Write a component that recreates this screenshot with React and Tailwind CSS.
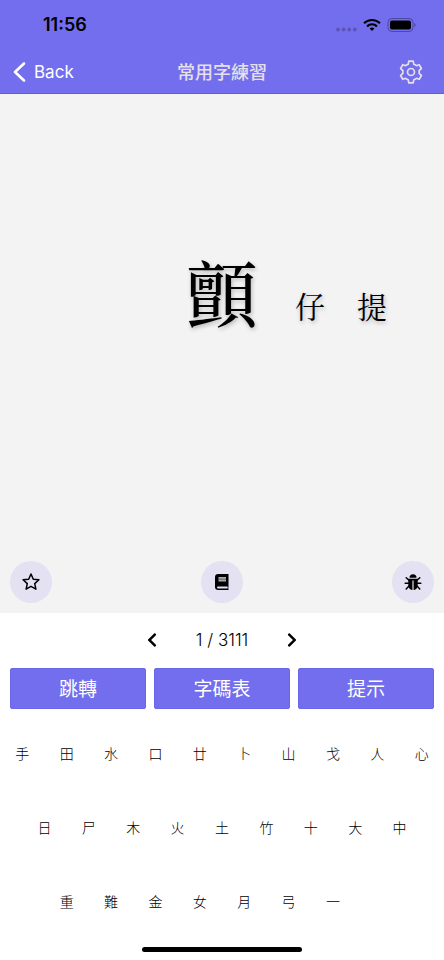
import React from 'react';
import { FaChevronLeft, FaChevronRight } from 'react-icons/fa';

const ACTIONS = ['跳轉', '字碼表', '提示'];

// The empty key keeps the third row aligned with the two above
const KEY_ROWS = [
  ['手', '田', '水', '口', '廿', '卜', '山', '戈', '人', '心'],
  ['日', '尸', '木', '火', '土', '竹', '十', '大', '中'],
  ['重', '難', '金', '女', '月', '弓', '一', ''],
];

function GearIcon() {
  return (
    <svg
      width="24"
      height="24"
      viewBox="0 0 24 24"
      fill="none"
      stroke="currentColor"
      strokeWidth="1.7"
      strokeLinejoin="round"
    >
      <path d="M9.8 1.200h4.400l.6 3.100q1.300.400 2.500 1.400l2.900-1 2.200 3.800-2.300 2.100q.3 1.400 0 2.800l2.300 2.100-2.200 3.800-2.900-1q-1.200 1-2.500 1.400l-.6 3.100H9.800l-.6-3.100q-1.300-.4-2.500-1.400l-2.900 1-2.200-3.800 2.300-2.100q-.3-1.400 0-2.800L1.600 8.500l2.200-3.800 2.900 1q1.200-1 2.500-1.400z" />
      <circle cx="12" cy="12" r="3.500" />
    </svg>
  );
}

function StarIcon() {
  return (
    <svg
      width="20"
      height="20"
      viewBox="0 0 20 20"
      fill="none"
      stroke="currentColor"
      strokeWidth="1.5"
      strokeLinejoin="round"
    >
      <path d="M10 2l2.300 5.200 5.600.6-4.200 3.800 1.200 5.600-4.900-2.900-4.900 2.900 1.200-5.600-4.200-3.800 5.600-.6z" />
    </svg>
  );
}

function BookIcon() {
  return (
    <svg width="16" height="18" viewBox="0 0 16 18">
      <path
        fill="currentColor"
        d="M4 1h10.500v13.200c-.4.400-.4 1.300 0 1.800v1H4c-1.700 0-3-1.200-3-2.800V4c0-1.700 1.300-3 3-3z"
      />
      <path fill="#aaa9b5" d="M4.500 4h7.500v4.500H4.500z" />
      <path fill="none" stroke="#111" strokeWidth="0.5" d="M4.500 6.200h7.500" />
      <path fill="#e3e1f2" d="M4 13.500h9.600v2H4a1 1 0 0 1 0-2z" />
    </svg>
  );
}

function BugIcon() {
  return (
    <svg width="18" height="18" viewBox="0 0 18 18">
      <path fill="currentColor" d="M5.500 4.700a3.500 3.500 0 0 1 7 0z" />
      <path fill="currentColor" d="M4.300 5.700h9.400v6.300c0 3-2 5-4.700 5s-4.700-2-4.700-5z" />
      <path
        fill="none"
        stroke="currentColor"
        strokeWidth="1.5"
        strokeLinecap="round"
        d="M2.200 4.700l2.800 2.500M15.800 4.700L13 7.200M1.200 10.200h3.600M16.800 10.200h-3.600M5 13l-2.800 3M13 13l2.800 3"
      />
      <path fill="none" stroke="#e3e1f2" strokeWidth="1.2" d="M9 7.500V17" />
    </svg>
  );
}

function StatusBar() {
  return (
    <div className="flex h-[50px] items-center justify-between pr-7 pl-[43px] text-black">
      <span className="text-lg leading-6 font-semibold">11:56</span>
      <div className="flex items-center gap-[6px]">
        <svg width="21" height="14" viewBox="0 0 21 14" fill="#5a54bd">
          <circle cx="2" cy="11.5" r="1.9" />
          <circle cx="7.6" cy="11.5" r="1.9" />
          <circle cx="13.2" cy="11.5" r="1.9" />
          <circle cx="18.8" cy="11.5" r="1.9" />
        </svg>
        <svg width="18" height="14" viewBox="0 0 18 14" fill="none" stroke="black" strokeWidth="2.2">
          <path d="M1 5.2C5.6.9 12.4.9 17 5.2" />
          <path d="M4 8.4c2.9-2.6 7.1-2.6 10 0" />
          <path d="M9 9.4c-1 0-1.8.4-2.4 1L9 13l2.4-2.6c-.6-.6-1.4-1-2.4-1z" fill="black" stroke="none" />
        </svg>
        <svg width="29" height="14" viewBox="0 0 29 14">
          <rect x="1" y="0.5" width="25" height="13" rx="4" fill="none" stroke="#4c47a0" />
          <rect x="3" y="2.5" width="21" height="9" rx="2" fill="black" />
          <path d="M27.3 5v4c.8-.3 1.3-1.1 1.3-2s-.5-1.7-1.3-2z" fill="#4c47a0" />
        </svg>
      </div>
    </div>
  );
}

function Header() {
  return (
    <header className="border-b border-[#635bdf] bg-[#736eed]">
      <StatusBar />
      <div className="grid h-[43px] grid-cols-3 items-center px-3">
        <button type="button" className="flex items-center gap-2 text-[17px] leading-6 text-white">
          <svg
            width="14"
            height="22"
            viewBox="0 0 14 22"
            fill="none"
            stroke="currentColor"
            strokeWidth="2.6"
            strokeLinecap="round"
            strokeLinejoin="round"
          >
            <path d="M12 2.5 3 11l9 8.500" />
          </svg>
          Back
        </button>
        <h1 className="pt-[2px] text-center text-lg leading-6 font-medium text-[#e5e0ea]">
          常用字練習
        </h1>
        <button
          type="button"
          aria-label="Settings"
          className="mr-[9px] justify-self-end text-[#e5e0ea]"
        >
          <GearIcon />
        </button>
      </div>
    </header>
  );
}

function RoundButton({ label, children }) {
  return (
    <button
      type="button"
      aria-label={label}
      className="flex size-[42px] items-center justify-center rounded-full bg-[#e3e1f2] text-black"
    >
      {children}
    </button>
  );
}

function Practice() {
  return (
    <main className="flex h-[519px] flex-col justify-between bg-[#f3f3f3] px-[10px] pb-[10px]">
      <div className="mt-39 ml-44 flex items-end font-['Noto_Serif_CJK_TC','Noto_Sans_CJK_TC',serif] text-black text-shadow-[1px_2px_4px_rgba(0,0,0,0.25)]">
        <span className="text-[72px] leading-20 font-medium">顫</span>
        <span className="ml-[37px] text-3xl leading-[50px]">仔</span>
        <span className="ml-8 text-3xl leading-[50px]">提</span>
      </div>
      <div className="flex justify-between">
        <RoundButton label="Favourite">
          <StarIcon />
        </RoundButton>
        <RoundButton label="Dictionary">
          <BookIcon />
        </RoundButton>
        <RoundButton label="Report">
          <BugIcon />
        </RoundButton>
      </div>
    </main>
  );
}

function Pager() {
  return (
    <div className="flex h-[53px] items-center justify-center gap-9">
      <button type="button" aria-label="Previous">
        <FaChevronLeft size={16} />
      </button>
      <span className="text-[17px] leading-6 font-light">1 / 3111</span>
      <button type="button" aria-label="Next">
        <FaChevronRight size={16} />
      </button>
    </div>
  );
}

function Keyboard() {
  return (
    <div className="mt-2 font-light">
      {KEY_ROWS.map((row, rowIndex) => (
        <div key={rowIndex} className="flex h-[74px] justify-center">
          {row.map((char, i) =>
            char ? (
              <button key={char} type="button" className="w-1/10 text-sm">
                {char}
              </button>
            ) : (
              <span key={i} className="w-1/10" />
            )
          )}
        </div>
      ))}
    </div>
  );
}

export default function App() {
  return (
    <div className="min-h-screen bg-white font-['Inter','Noto_Sans_CJK_TC',sans-serif] text-black">
      <Header />
      <Practice />
      <Pager />
      <div className="mt-[2px] grid grid-cols-3 gap-2 px-[10px]">
        {ACTIONS.map((label) => (
          <button
            key={label}
            type="button"
            className="h-[41px] rounded-xs border border-[#6c66e8] bg-[#736eed] pt-[2px] text-[19px] leading-6 text-white"
          >
            {label}
          </button>
        ))}
      </div>
      <Keyboard />
      <div className="mx-auto mt-2 h-[5px] w-40 rounded-full bg-black" />
    </div>
  );
}
